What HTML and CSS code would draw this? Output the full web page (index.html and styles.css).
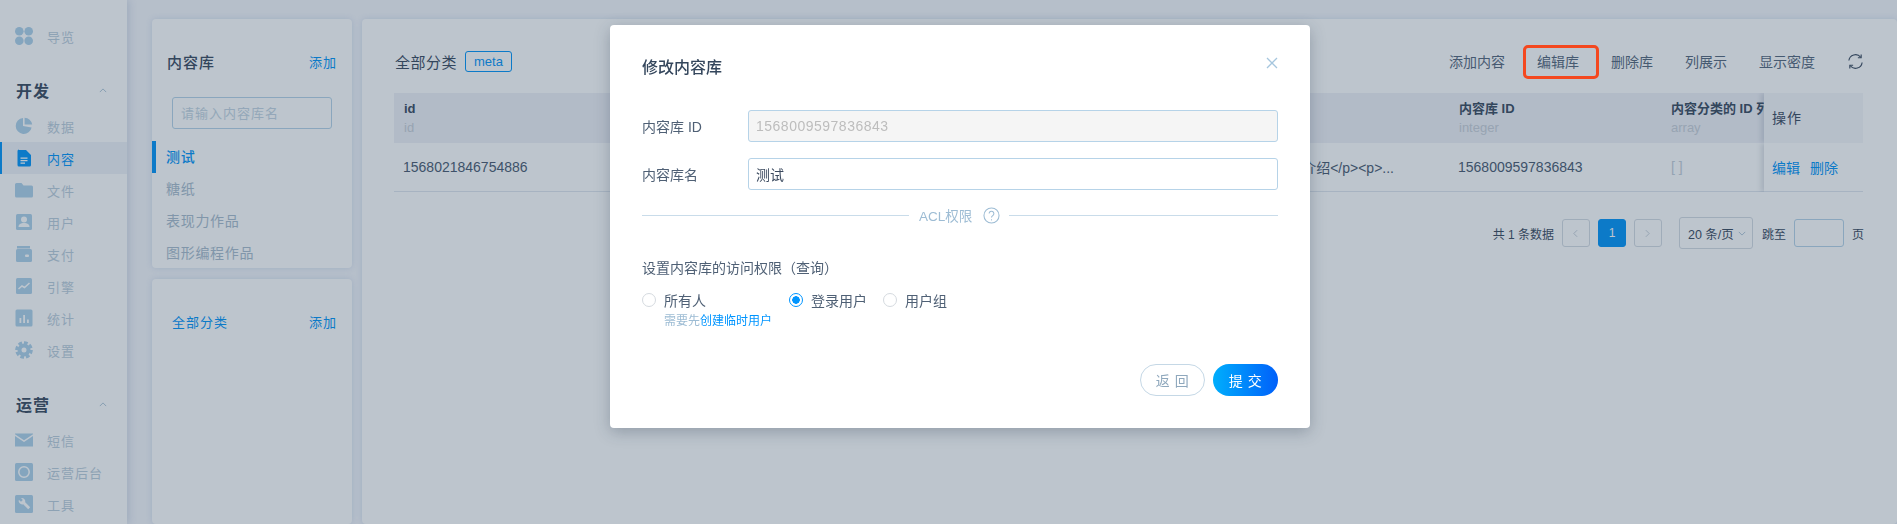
FILE: index.html
```html
<!DOCTYPE html>
<html>
<head>
    <title>内容库</title>
    <link rel="stylesheet" href="styles.css">
</head>
<body>
    <div class="app">
        <aside class="sidebar">
            <a class="nav-item">
                <svg class="nav-icon" viewBox="0 0 18 18"><circle cx="4.300" cy="4.300" r="4.300"/><circle cx="13.700" cy="4.300" r="4.300"/><circle cx="4.300" cy="13.700" r="4.300"/><circle cx="13.700" cy="13.700" r="4.300"/></svg>
                <span>导览</span>
            </a>
            <div class="nav-group">
                <div class="nav-heading"><span>开发</span><svg class="chevron" viewBox="0 0 10 6"><path d="M1 5l4-4 4 4"/></svg></div>
                <a class="nav-item">
                    <svg class="nav-icon" viewBox="0 0 18 18"><path d="M8 1a8 8 0 1 0 8.600 9.400L8 9z"/><path d="M9.600 0.800v6.800h7.600a8 8 0 0 0-7.600-6.800z"/></svg>
                    <span>数据</span>
                </a>
                <a class="nav-item active">
                    <svg class="nav-icon" viewBox="0 0 18 18"><path d="M4 1h7l5 5v10a1.500 1.500 0 0 1-1.500 1.500h-10.500a1.500 1.500 0 0 1-1.500-1.500v-14a1.500 1.500 0 0 1 1.500-1.500z"/><path class="cut" d="M5.500 8.500h7v1.200h-7zM5.500 11h7v1.200h-7zM5.500 13.500h4.500v1.200h-4.500z"/></svg>
                    <span>内容</span>
                </a>
                <a class="nav-item">
                    <svg class="nav-icon" viewBox="0 0 18 18"><path d="M1.500 2h5l2 2.500h8a1.500 1.500 0 0 1 1.500 1.500v9a1.500 1.500 0 0 1-1.500 1.500h-15a1.500 1.500 0 0 1-1.500-1.500v-11.500a1.500 1.500 0 0 1 1.500-1.500z"/></svg>
                    <span>文件</span>
                </a>
                <a class="nav-item">
                    <svg class="nav-icon" viewBox="0 0 18 18"><rect x="1" y="1" width="16" height="16" rx="1.500"/><circle class="cut" cx="9" cy="6.500" r="3"/><path class="cut" d="M3.500 14c0-3 2.500-4 5.500-4s5.500 1 5.500 4z"/></svg>
                    <span>用户</span>
                </a>
                <a class="nav-item">
                    <svg class="nav-icon" viewBox="0 0 18 18"><path d="M2 1h13v2.500h-13z"/><rect x="1" y="4" width="16" height="13" rx="1.500"/><rect class="cut" x="10" y="9.500" width="4" height="2.500" rx="1"/></svg>
                    <span>支付</span>
                </a>
                <a class="nav-item">
                    <svg class="nav-icon" viewBox="0 0 18 18"><rect x="1" y="1" width="16" height="16" rx="1.500"/><path class="cut-line" d="M3.500 12l3.500-3 2.500 1.500 5-4.500"/></svg>
                    <span>引擎</span>
                </a>
                <a class="nav-item">
                    <svg class="nav-icon" viewBox="0 0 18 18"><rect x="0.500" y="0.500" width="17" height="17" rx="1.500"/><path class="cut" d="M4.500 9h1.800v5h-1.800zM8.200 6h1.800v8h-1.800zM12 10.500h1.800v3.500h-1.800z"/></svg>
                    <span>统计</span>
                </a>
                <a class="nav-item">
                    <svg class="nav-icon" viewBox="0 0 18 18"><circle class="gear-teeth" cx="9" cy="9" r="7.300"/><circle class="gear-ring" cx="9" cy="9" r="4.500"/></svg>
                    <span>设置</span>
                </a>
            </div>
            <div class="nav-group">
                <div class="nav-heading"><span>运营</span><svg class="chevron" viewBox="0 0 10 6"><path d="M1 5l4-4 4 4"/></svg></div>
                <a class="nav-item">
                    <svg class="nav-icon" viewBox="0 0 18 18"><path d="M0 2.500h18v0.800l-9 6-9-6z"/><path d="M0 5l9 6 9-6v10.500h-18z"/></svg>
                    <span>短信</span>
                </a>
                <a class="nav-item">
                    <svg class="nav-icon" viewBox="0 0 18 18"><rect width="18" height="18" rx="1.500"/><circle class="cut-line" cx="9" cy="9" r="5.200"/></svg>
                    <span>运营后台</span>
                </a>
                <a class="nav-item">
                    <svg class="nav-icon" viewBox="0 0 18 18"><rect width="18" height="18" rx="1.500"/><path class="cut" d="M6 3a3.500 3.500 0 0 1 4.200 4.200l5 5-2 2-5-5a3.500 3.500 0 0 1-4.400-4.400l2.200 2 1.800-1.800z"/></svg>
                    <span>工具</span>
                </a>
            </div>
        </aside>

        <div class="content">
            <div class="left-col">
                <section class="panel library-panel">
                    <div class="panel-head">
                        <h3>内容库</h3>
                        <a class="link">添加</a>
                    </div>
                    <input class="search" type="text" placeholder="请输入内容库名">
                    <ul class="library-list">
                        <li class="active">测试</li>
                        <li>糖纸</li>
                        <li>表现力作品</li>
                        <li>图形编程作品</li>
                    </ul>
                </section>
                <section class="panel category-panel">
                    <div class="panel-head">
                        <a class="link category-all">全部分类</a>
                        <a class="link">添加</a>
                    </div>
                </section>
            </div>

            <section class="panel main-panel">
                <div class="toolbar">
                    <h3>全部分类</h3>
                    <span class="tag">meta</span>
                    <div class="toolbar-actions">
                        <a>添加内容</a>
                        <a>编辑库</a>
                        <a>删除库</a>
                        <a>列展示</a>
                        <a>显示密度</a>
                        <svg class="refresh" viewBox="0 0 18 18"><path d="M2 8a7 7 0 0 1 12.500-3.500M16 10a7 7 0 0 1-12.500 3.500"/><path d="M15 1.500v3.500h-3.500M3 16.500v-3.500h3.500"/></svg>
                    </div>
                </div>

                <table class="data-table">
                    <colgroup>
                        <col class="col-id">
                        <col class="col-name">
                        <col class="col-body">
                        <col class="col-lib">
                        <col class="col-cats">
                        <col class="col-ops">
                    </colgroup>
                    <thead>
                        <tr>
                            <th>id<small>id</small></th>
                            <th>内容库名<small>string</small></th>
                            <th>内容详情<small>string</small></th>
                            <th>内容库 ID<small>integer</small></th>
                            <th>内容分类的 ID 列表<small>array</small></th>
                            <th class="ops">操作</th>
                        </tr>
                    </thead>
                    <tbody>
                        <tr>
                            <td>1568021846754886</td>
                            <td>测试内容</td>
                            <td>&lt;p&gt;内容介绍&lt;/p&gt;&lt;p&gt;...</td>
                            <td>1568009597836843</td>
                            <td class="empty">[ ]</td>
                            <td class="ops"><a class="link">编辑</a><a class="link">删除</a></td>
                        </tr>
                    </tbody>
                </table>

                <div class="pager">
                    <span class="pager-total">共 1 条数据</span>
                    <a class="page-btn"><svg viewBox="0 0 6 10"><path d="M5 1l-4 4 4 4"/></svg></a>
                    <a class="page-btn current">1</a>
                    <a class="page-btn"><svg viewBox="0 0 6 10"><path d="M1 1l4 4-4 4"/></svg></a>
                    <div class="page-size">20 条/页<svg viewBox="0 0 10 6"><path d="M1 1l4 4 4-4"/></svg></div>
                    <span class="pager-jump">跳至</span>
                    <input class="page-input" type="text">
                    <span>页</span>
                </div>
            </section>
        </div>
    </div>

    <div class="mask"></div>

    <div class="modal">
        <div class="modal-head">
            <h2>修改内容库</h2>
            <svg class="modal-close" viewBox="0 0 12 12"><path d="M1 1l10 10M11 1l-10 10"/></svg>
        </div>
        <div class="field first">
            <label>内容库 ID</label>
            <input class="disabled" type="text" value="1568009597836843" disabled>
        </div>
        <div class="field">
            <label>内容库名</label>
            <input type="text" value="测试">
        </div>
        <div class="divider">
            <span>ACL权限</span>
            <svg viewBox="0 0 18 18"><circle cx="9" cy="9" r="8"/><path d="M6.500 7a2.500 2.500 0 1 1 3.800 2.100c-.9.600-1.300 1-1.300 2.100"/><path d="M9 13v1.200"/></svg>
        </div>
        <p class="perm-title">设置内容库的访问权限（查询）</p>
        <div class="radio-row">
            <div class="radio-item wide">
                <label class="radio"><i></i>所有人</label>
                <p class="radio-hint">需要先<a>创建临时用户</a></p>
            </div>
            <div class="radio-item">
                <label class="radio checked"><i></i>登录用户</label>
            </div>
            <div class="radio-item">
                <label class="radio"><i></i>用户组</label>
            </div>
        </div>
        <div class="modal-foot">
            <button class="btn-back">返 回</button>
            <button class="btn-submit">提 交</button>
        </div>
    </div>

    <div class="callout"></div>
</body>
</html>
```

FILE: styles.css
```css
* {
    box-sizing: border-box;
}

html, body {
    margin: 0;
    height: 100%;
    overflow: hidden;
}

body {
    font-family: "Liberation Sans", "Noto Sans CJK SC", sans-serif;
    font-size: 14px;
    color: #3a495e;
    background-color: #f5f6fb;
}

h2, h3, p, ul {
    margin: 0;
    padding: 0;
}

.app {
    display: flex;
    height: 524px;
}

/* sidebar */
.sidebar {
    width: 127px;
    flex: none;
    padding-top: 20px;
    background-color: #fff;
    box-shadow: 2px 0 8px rgba(60, 100, 150, 0.18);
}

.nav-item {
    display: flex;
    align-items: center;
    height: 32px;
    padding-left: 13px;
    color: #bbcddb;
    letter-spacing: 1px;
    border-left: 2px solid transparent;
}

.nav-item span {
    font-size: 13px;
}

.nav-icon {
    width: 18px;
    height: 18px;
    margin-right: 14px;
    fill: #aed1ea;
}

.nav-icon .cut {
    fill: #fff;
}

.nav-icon .cut-line {
    fill: none;
    stroke: #fff;
    stroke-width: 1.5;
}

.nav-icon .gear-teeth {
    fill: none;
    stroke: #aed1ea;
    stroke-width: 3;
    stroke-dasharray: 3.700 2;
}

.nav-icon .gear-ring {
    fill: none;
    stroke: #aed1ea;
    stroke-width: 4;
}

.nav-item.active {
    color: #0294f8;
    background-color: #f0f2f8;
    border-left-color: #0294f8;
}

.nav-item.active .nav-icon {
    fill: #0294f8;
}

.nav-group {
    margin-top: 22px;
}

.nav-heading {
    display: flex;
    align-items: center;
    justify-content: space-between;
    height: 32px;
    margin-bottom: 4px;
    padding: 0 20px 0 16px;
    font-size: 16px;
    font-weight: bold;
    letter-spacing: 1px;
}

.nav-group + .nav-group {
    margin-top: 22px;
}

.chevron {
    width: 8px;
    height: 5px;
    fill: none;
    stroke: #aec4d6;
    stroke-width: 1.2;
}

/* content area */
.content {
    flex: 1;
    min-width: 0;
    display: flex;
    gap: 10px;
    padding: 19px 0 0 25px;
}

.left-col {
    width: 200px;
    flex: none;
    display: flex;
    flex-direction: column;
    gap: 11px;
}

.panel {
    background-color: #fff;
    border-radius: 4px;
    box-shadow: 0 0 6px rgba(90, 140, 190, 0.2);
}

.library-panel {
    height: 249px;
    overflow: hidden;
    padding-top: 31px;
}

.category-panel {
    flex: 1;
    padding-top: 31px;
}

.panel-head {
    display: flex;
    align-items: center;
    justify-content: space-between;
    height: 22px;
    padding: 0 15px;
}

.panel-head h3 {
    font-size: 15px;
    font-weight: 500;
    letter-spacing: 1px;
}

.link {
    color: #0294f8;
    font-size: 13px;
    letter-spacing: 1px;
}

.category-all {
    margin-left: 5px;
}

.search {
    display: block;
    width: 160px;
    height: 32px;
    margin: 25px 0 0 20px;
    padding: 0 8px;
    border: 1px solid #b6d3e8;
    border-radius: 3px;
    font: inherit;
    font-size: 13px;
    letter-spacing: 1px;
    outline: none;
}

.search::placeholder {
    color: #c4d5e2;
}

.library-list {
    list-style: none;
    margin-top: 12px;
}

.library-list li {
    height: 32px;
    line-height: 32px;
    padding-left: 14px;
    letter-spacing: .7px;
    color: #a9bccd;
}

.library-list li.active {
    color: #0294f8;
    font-weight: 500;
    border-left: 4px solid #0294f8;
    padding-left: 10px;
}

.main-panel {
    flex: 1;
    min-width: 0;
    padding: 31px 33px 0 32px;
}

.toolbar {
    display: flex;
    align-items: center;
    height: 22px;
}

.toolbar h3 {
    font-size: 15px;
    font-weight: normal;
    letter-spacing: .5px;
    margin-left: 1px;
}

.tag {
    height: 21px;
    line-height: 19px;
    margin-left: 8px;
    padding: 0 8px;
    border: 1px solid #0294f8;
    border-radius: 3px;
    color: #0294f8;
    font-size: 13px;
}

.toolbar-actions {
    margin-left: auto;
    display: flex;
    align-items: center;
    gap: 32px;
    color: #55667b;
}

.refresh {
    width: 17px;
    height: 17px;
    fill: none;
    stroke: #3a495e;
    stroke-width: 1.2;
}

/* table */
.data-table {
    width: 1469px;
    margin-top: 21px;
    table-layout: fixed;
    border-collapse: separate;
    border-spacing: 0;
}

.col-id { width: 306px; }
.col-name { width: 541px; }
.col-body { width: 208px; }
.col-lib { width: 212px; }
.col-cats { width: 103px; }
.col-ops { width: 99px; }

.data-table th,
.data-table td {
    padding: 0 10px;
    text-align: left;
    white-space: nowrap;
    overflow: hidden;
}

.data-table th {
    height: 50px;
    background-color: #f0f1f7;
    font-size: 13px;
    line-height: 19px;
}

.data-table th small {
    display: block;
    font-size: 13px;
    font-weight: normal;
    color: #c9cfd8;
}

.data-table td {
    height: 49px;
    padding-left: 9px;
    color: #4a5a70;
    border-bottom: 1px solid #e0e6ee;
}

.data-table td.empty {
    padding-left: 10px;
    color: #c5ced8;
}

.data-table .ops {
    padding: 0 8px;
    background-color: #fff;
    box-shadow: -3px 0 5px rgba(60, 80, 110, 0.18);
    clip-path: inset(0 0 0 -8px);
}

.data-table th.ops {
    background-color: #f5f6fa;
    font-weight: normal;
    font-size: 14px;
    letter-spacing: 1px;
}

.data-table .ops .link {
    font-size: 14px;
    letter-spacing: 0;
}

.data-table .ops .link + .link {
    margin-left: 10px;
}

/* pager */
.pager {
    display: flex;
    align-items: center;
    justify-content: flex-end;
    margin-top: 25px;
    height: 32px;
    width: 1470px;
    font-size: 12px;
}

.pager-total {
    margin-right: 8px;
}

.page-btn {
    width: 28px;
    height: 28px;
    margin-right: 8px;
    display: flex;
    align-items: center;
    justify-content: center;
    border: 1px solid #d5dbe3;
    border-radius: 3px;
}

.page-btn svg {
    width: 5px;
    height: 9px;
    fill: none;
    stroke: #bcc6d2;
    stroke-width: 1;
}

.page-btn.current {
    background-color: #0294f8;
    border-color: #0294f8;
    color: #fff;
}

.page-size {
    width: 74px;
    height: 32px;
    margin-left: 9px;
    padding-left: 8px;
    display: flex;
    align-items: center;
    border: 1px solid #d5dbe3;
    border-radius: 3px;
    font-size: 12.500px;
}

.page-size svg {
    width: 8px;
    height: 5px;
    margin-left: 4px;
    fill: none;
    stroke: #aec4d6;
    stroke-width: 1.2;
}

.pager-jump {
    margin-left: 9px;
}

.page-input {
    width: 50px;
    height: 28px;
    margin: 0 8px;
    border: 1px solid #b6d3e8;
    border-radius: 3px;
    outline: none;
}

/* modal */
.mask {
    position: fixed;
    inset: 0;
    background-color: rgba(38, 62, 88, 0.3);
}

.modal {
    position: fixed;
    top: 25px;
    left: 610px;
    width: 700px;
    height: 403px;
    padding: 32px;
    background-color: #fff;
    border-radius: 4px;
    box-shadow: 0 4px 16px rgba(30, 45, 70, 0.28);
}

.modal-head {
    display: flex;
    justify-content: space-between;
    height: 22px;
}

.modal-head h2 {
    font-size: 16px;
    font-weight: 500;
    line-height: 22px;
    color: #34465c;
}

.modal-close {
    width: 12px;
    height: 12px;
    fill: none;
    stroke: #a6c6de;
    stroke-width: 1.3;
}

.field {
    display: flex;
    align-items: center;
    margin-top: 16px;
}

.field.first {
    margin-top: 31px;
}

.field label {
    width: 106px;
    color: #4f6075;
}

.field input {
    width: 530px;
    height: 32px;
    padding: 0 7px;
    border: 1px solid #b6d3e8;
    border-radius: 3px;
    font: inherit;
    color: #3a495e;
    outline: none;
}

.field input.disabled {
    background-color: #f5f5f5;
    color: #bdbdbd;
    letter-spacing: .5px;
}

.divider {
    display: flex;
    align-items: center;
    height: 16px;
    margin-top: 17px;
    color: #9dbcd4;
    font-size: 13.500px;
}

.divider::before,
.divider::after {
    content: "";
    flex: 1;
    height: 1px;
    background-color: #c9dcea;
}

.divider span {
    margin-left: 10px;
}

.divider svg {
    width: 17px;
    height: 17px;
    margin: 0 9px 0 11px;
    fill: none;
    stroke: #9dbcd4;
    stroke-width: 1.1;
}

.divider::before {
    flex: none;
    width: 267px;
}

.perm-title {
    margin-top: 35px;
    line-height: 20px;
    color: #4f6075;
}

.radio-row {
    display: flex;
    gap: 16px;
    margin-top: 12px;
}

.radio-item.wide {
    width: 131px;
}

.radio {
    display: flex;
    align-items: center;
    height: 20px;
    color: #4f6075;
}

.radio i {
    width: 14px;
    height: 14px;
    margin-right: 8px;
    border: 1px solid #d5dadf;
    border-radius: 50%;
    background-color: #fff;
}

.radio.checked i {
    border-color: #0095ff;
    background: radial-gradient(circle, #0095ff 3.500px, #fff 4px);
}

.radio-hint {
    margin: 3px 0 0 22px;
    font-size: 12px;
    line-height: 16px;
    color: #9dbcd4;
    white-space: nowrap;
}

.radio-hint a {
    color: #0095ff;
}

.modal-foot {
    display: flex;
    justify-content: flex-end;
    gap: 8px;
    margin-top: 35px;
}

.modal-foot button {
    width: 65px;
    height: 32px;
    border-radius: 16px;
    font: inherit;
    letter-spacing: .5px;
    cursor: pointer;
}

.btn-back {
    border: 1px solid #c5d8e6;
    background-color: #fff;
    color: #8fa8bd;
}

.btn-submit {
    border: none;
    background: linear-gradient(90deg, #00aefc, #0060fa);
    color: #fff;
    font-weight: 500;
}

/* red annotation on the screenshot */
.callout {
    position: fixed;
    top: 45px;
    left: 1523px;
    width: 76px;
    height: 34px;
    border: 3px solid #f4481f;
    border-radius: 5px;
}
```
